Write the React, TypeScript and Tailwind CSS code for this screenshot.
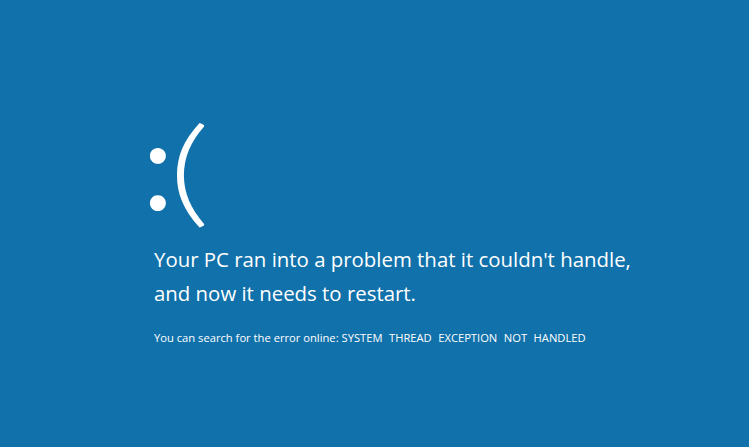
export default function App() {
  return (
    <main
      className="h-[447px] w-[749px] overflow-hidden bg-[#1171aa] text-white"
      style={{ fontFamily: '"Open Sans", "Noto Sans", sans-serif' }}
    >
      <div className="flex flex-col pl-[154px] pt-[109px]">
        <div className="-ml-[12px] flex h-[117px] items-start [font-family:Lato,'Open_Sans',sans-serif]">
          <span className="mt-[-11px] text-[127px] leading-[127px] font-normal tracking-[-6px]">:</span>
          <span className="mt-[0px] origin-left scale-x-[1.4] text-[117px] leading-[117px] font-light">(</span>
        </div>
        <p className="mt-[16px] text-[20.4px] leading-[34px]">
          Your PC ran into a problem that it couldn't handle,
          <br />
          and now it needs to restart.
        </p>
        <p className="mt-[20px] text-[11.2px] leading-[16px]">
          You can search for the error online:{" "}
          <span className="[word-spacing:3.6px]">SYSTEM THREAD EXCEPTION NOT HANDLED</span>
        </p>
      </div>
    </main>
  );
}
